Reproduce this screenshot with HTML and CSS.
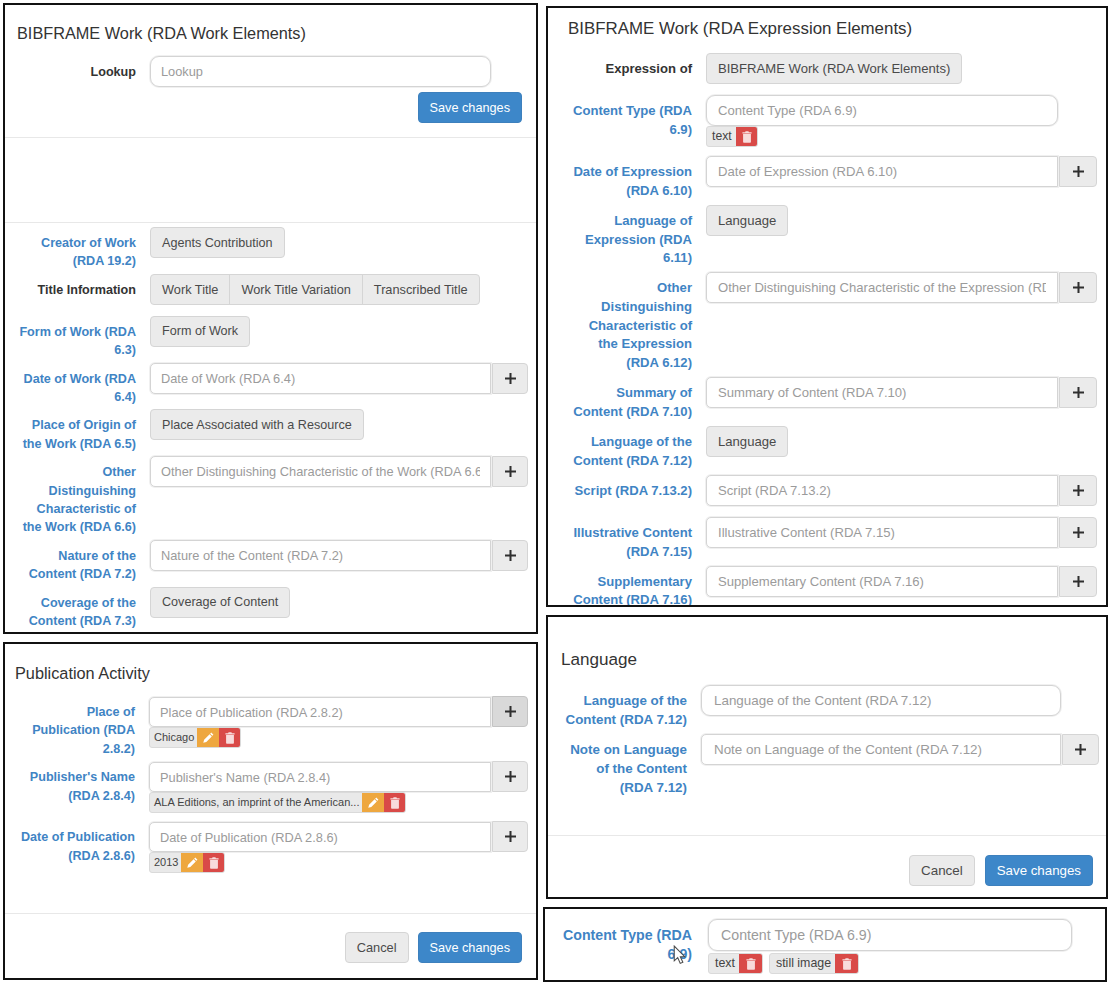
FILE: index.html
```html
<!DOCTYPE html>
<html lang="en">
<head>
<meta charset="utf-8">
<title>BIBFRAME RDA forms</title>
<link rel="stylesheet" href="styles.css">
</head>
<body>
<svg class="defs" width="0" height="0" aria-hidden="true">
  <symbol id="i-plus" viewBox="0 0 12 12"><path d="M4.9 0h2.2v4.9H12v2.2H7.100V12H4.900V7.100H0V4.900h4.900z"/></symbol>
  <symbol id="i-pencil" viewBox="0 0 12 12"><path d="M9 .6l2.400 2.400-1.200 1.200-2.400-2.400zM7.200 2.400l2.400 2.400-6 6-3.300.9.900-3.300z"/></symbol>
  <symbol id="i-trash" viewBox="0 0 12 14"><path d="M4.300 0h3.400l.6 1.200H11.500v1.500H.5V1.200h3.200zM1.300 3.500h9.400V13a1 1 0 0 1-1 1H2.300a1 1 0 0 1-1-1z"/><path class="slot" d="M3.400 5v7M6 5v7M8.600 5v7"/></symbol>
</svg>

<section class="panel pa">
  <h4 class="title">BIBFRAME Work (RDA Work Elements)</h4>
  <div class="row"><label class="lab dark">Lookup</label><div class="field"><div class="group"><input class="ctl solo" placeholder="Lookup"></div></div></div>
  <div class="actions inline"><button class="btn primary">Save changes</button></div>
  <hr class="rule">
  <div class="gap-empty"></div>
  <hr class="rule">
  <div class="rows">
    <div class="row"><label class="lab">Creator of Work (RDA 19.2)</label><div class="field"><button class="btn">Agents Contribution</button></div></div>
    <div class="row"><label class="lab dark">Title Information</label><div class="field"><div class="btn-group"><button class="btn">Work Title</button><button class="btn">Work Title Variation</button><button class="btn">Transcribed Title</button></div></div></div>
    <div class="row"><label class="lab">Form of Work (RDA 6.3)</label><div class="field"><button class="btn">Form of Work</button></div></div>
    <div class="row"><label class="lab">Date of Work (RDA 6.4)</label><div class="field"><div class="group"><input class="ctl" placeholder="Date of Work (RDA 6.4)"><button class="btn add"><svg class="ic-plus"><use href="#i-plus"/></svg></button></div></div></div>
    <div class="row"><label class="lab">Place of Origin of the Work (RDA 6.5)</label><div class="field"><button class="btn">Place Associated with a Resource</button></div></div>
    <div class="row"><label class="lab">Other Distinguishing Characteristic of the Work (RDA 6.6)</label><div class="field"><div class="group"><input class="ctl" placeholder="Other Distinguishing Characteristic of the Work (RDA 6.6)"><button class="btn add"><svg class="ic-plus"><use href="#i-plus"/></svg></button></div></div></div>
    <div class="row"><label class="lab">Nature of the Content (RDA 7.2)</label><div class="field"><div class="group"><input class="ctl" placeholder="Nature of the Content (RDA 7.2)"><button class="btn add"><svg class="ic-plus"><use href="#i-plus"/></svg></button></div></div></div>
    <div class="row"><label class="lab">Coverage of the Content (RDA 7.3)</label><div class="field"><button class="btn">Coverage of Content</button></div></div>
  </div>
</section>

<section class="panel pb">
  <h4 class="title">Publication Activity</h4>
  <div class="row"><label class="lab">Place of Publication (RDA 2.8.2)</label><div class="field"><div class="group"><input class="ctl" placeholder="Place of Publication (RDA 2.8.2)"><button class="btn add pressed"><svg class="ic-plus"><use href="#i-plus"/></svg></button></div>
    <div class="tags"><span class="tag"><span class="tag-text">Chicago</span><span class="tag-btn edit"><svg class="ic-pencil"><use href="#i-pencil"/></svg></span><span class="tag-btn del"><svg class="ic-trash"><use href="#i-trash"/></svg></span></span></div></div></div>
  <div class="row"><label class="lab">Publisher's Name (RDA 2.8.4)</label><div class="field"><div class="group"><input class="ctl" placeholder="Publisher's Name (RDA 2.8.4)"><button class="btn add"><svg class="ic-plus"><use href="#i-plus"/></svg></button></div>
    <div class="tags"><span class="tag"><span class="tag-text">ALA Editions, an imprint of the American...</span><span class="tag-btn edit"><svg class="ic-pencil"><use href="#i-pencil"/></svg></span><span class="tag-btn del"><svg class="ic-trash"><use href="#i-trash"/></svg></span></span></div></div></div>
  <div class="row"><label class="lab">Date of Publication (RDA 2.8.6)</label><div class="field"><div class="group"><input class="ctl" placeholder="Date of Publication (RDA 2.8.6)"><button class="btn add"><svg class="ic-plus"><use href="#i-plus"/></svg></button></div>
    <div class="tags"><span class="tag"><span class="tag-text">2013</span><span class="tag-btn edit"><svg class="ic-pencil"><use href="#i-pencil"/></svg></span><span class="tag-btn del"><svg class="ic-trash"><use href="#i-trash"/></svg></span></span></div></div></div>
  <hr class="rule foot-rule">
  <div class="actions"><button class="btn">Cancel</button><button class="btn primary">Save changes</button></div>
</section>

<section class="panel pc">
  <h4 class="title">BIBFRAME Work (RDA Expression Elements)</h4>
  <div class="row"><label class="lab dark">Expression of</label><div class="field"><button class="btn">BIBFRAME Work (RDA Work Elements)</button></div></div>
  <div class="row"><label class="lab">Content Type (RDA 6.9)</label><div class="field"><div class="group"><input class="ctl solo" placeholder="Content Type (RDA 6.9)"></div>
    <div class="tags"><span class="tag"><span class="tag-text">text</span><span class="tag-btn del"><svg class="ic-trash"><use href="#i-trash"/></svg></span></span></div></div></div>
  <div class="row"><label class="lab">Date of Expression (RDA 6.10)</label><div class="field"><div class="group"><input class="ctl" placeholder="Date of Expression (RDA 6.10)"><button class="btn add"><svg class="ic-plus"><use href="#i-plus"/></svg></button></div></div></div>
  <div class="row"><label class="lab">Language of Expression (RDA 6.11)</label><div class="field"><button class="btn">Language</button></div></div>
  <div class="row"><label class="lab">Other Distinguishing Characteristic of the Expression (RDA 6.12)</label><div class="field"><div class="group"><input class="ctl" placeholder="Other Distinguishing Characteristic of the Expression (RDA 6.12)"><button class="btn add"><svg class="ic-plus"><use href="#i-plus"/></svg></button></div></div></div>
  <div class="row"><label class="lab">Summary of Content (RDA 7.10)</label><div class="field"><div class="group"><input class="ctl" placeholder="Summary of Content (RDA 7.10)"><button class="btn add"><svg class="ic-plus"><use href="#i-plus"/></svg></button></div></div></div>
  <div class="row"><label class="lab">Language of the Content (RDA 7.12)</label><div class="field"><button class="btn">Language</button></div></div>
  <div class="row"><label class="lab">Script (RDA 7.13.2)</label><div class="field"><div class="group"><input class="ctl" placeholder="Script (RDA 7.13.2)"><button class="btn add"><svg class="ic-plus"><use href="#i-plus"/></svg></button></div></div></div>
  <div class="row"><label class="lab">Illustrative Content (RDA 7.15)</label><div class="field"><div class="group"><input class="ctl" placeholder="Illustrative Content (RDA 7.15)"><button class="btn add"><svg class="ic-plus"><use href="#i-plus"/></svg></button></div></div></div>
  <div class="row"><label class="lab">Supplementary Content (RDA 7.16)</label><div class="field"><div class="group"><input class="ctl" placeholder="Supplementary Content (RDA 7.16)"><button class="btn add"><svg class="ic-plus"><use href="#i-plus"/></svg></button></div></div></div>
</section>

<section class="panel pd">
  <h4 class="title">Language</h4>
  <div class="row"><label class="lab">Language of the Content (RDA 7.12)</label><div class="field"><div class="group"><input class="ctl solo" placeholder="Language of the Content (RDA 7.12)"></div></div></div>
  <div class="row"><label class="lab">Note on Language of the Content (RDA 7.12)</label><div class="field"><div class="group"><input class="ctl" placeholder="Note on Language of the Content (RDA 7.12)"><button class="btn add"><svg class="ic-plus"><use href="#i-plus"/></svg></button></div></div></div>
  <hr class="rule foot-rule">
  <div class="actions"><button class="btn">Cancel</button><button class="btn primary">Save changes</button></div>
</section>

<section class="panel pe">
  <div class="row"><label class="lab">Content Type (RDA 6.9)</label><div class="field"><div class="group"><input class="ctl solo" placeholder="Content Type (RDA 6.9)"></div>
    <div class="tags"><span class="tag"><span class="tag-text">text</span><span class="tag-btn del"><svg class="ic-trash"><use href="#i-trash"/></svg></span></span><span class="tag"><span class="tag-text">still image</span><span class="tag-btn del"><svg class="ic-trash"><use href="#i-trash"/></svg></span></span></div></div></div>
  <svg class="cursor" viewBox="0 0 12 19" width="13" height="20"><path d="M1 1v14l3.300-3 2.400 5.500 2.500-1.100-2.400-5.300H11z" fill="#fff" stroke="#4a4a4a" stroke-width="1"/></svg>
</section>
</body>
</html>
```
FILE: styles.css
```css
* { box-sizing: border-box; }
html, body { margin: 0; padding: 0; }
body {
  position: relative;
  width: 1111px;
  height: 984px;
  background: #fff;
  overflow: hidden;
  font-family: "Liberation Sans", Arial, sans-serif;
  color: #333;
}
.defs { position: absolute; }

/* Collage of separate dialogs placed on a free canvas */
.panel {
  --lab-w: 131px;
  --lab-pad: 13px;
  --lab-top: 7px;
  --lab-end: 3px;
  --lab-fs: 12.6px;
  --lab-gap: 14px;
  --ctl-w: 341px;
  --ctl-pad: 10px;
  --ctl-h: 31px;
  --add-w: 36px;
  --lh: 18.4px;
  --tag-fs: 11px;
  --tag-btn: 22px;
  --tag-pad-l: 4px;
  --tag-pad-r: 3px;
  position: absolute;
  border: 2px solid #111;
  background: #fff;
  overflow: hidden;
  font-size: 12.8px;
}
.pa { left: 3px; top: 3px; width: 535px; height: 631px; padding-top: 18px; }
.pb {
  left: 3px; top: 642px; width: 535px; height: 338px; padding-top: 19px;
  --ctl-w: 342px; --ctl-h: 30px; --lab-w: 130px; --lab-pad: 12px; --lab-top: 6px; --lab-end: 4px;
}
.pc {
  left: 546px; top: 6px; width: 562px; height: 601px; padding-top: 11px;
  --lab-w: 144px; --lab-pad: 22px; --lab-end: 4.4px; --lab-fs: 13.1px;
  --ctl-w: 352px; --ctl-pad: 11px; --add-w: 38px; --lh: 18.7px; --tag-fs: 12.2px;
  --tag-pad-l: 5px; --tag-pad-r: 4px;
  font-size: 13.1px;
}
.pd {
  left: 546px; top: 615px; width: 562px; height: 284px; padding-top: 33px;
  --lab-w: 139px; --lab-pad: 14px; --lab-top: 6px; --lab-end: 5px; --lab-fs: 13.4px;
  --ctl-w: 360px; --ctl-pad: 12px; --add-w: 37px; --lh: 19px;
  font-size: 13.4px;
}
.pe {
  left: 543px; top: 907px; width: 564px; height: 75px; padding-top: 10px;
  --lab-w: 147px; --lab-pad: 10px; --lab-gap: 16px; --lab-fs: 14.2px;
  --ctl-w: 364px; --ctl-pad: 12px; --ctl-h: 32px; --lh: 19px; --tag-fs: 12.4px; --tag-btn: 24px;
  --tag-pad-l: 6px; --tag-pad-r: 4px;
  font-size: 14.2px;
}

.title {
  margin: 0 0 13px;
  padding-left: 12px;
  font-size: 16.3px;
  line-height: 20px;
  font-weight: 400;
  color: #333;
}
.pb .title { padding-left: 10px; margin-bottom: 14px; }
.pc .title { padding-left: 20px; margin-bottom: 14px; font-size: 16.9px; }
.pd .title { padding-left: 13px; margin-bottom: 15px; font-size: 17.1px; }

.row { display: flex; gap: var(--lab-gap); }
.lab {
  flex: none;
  width: var(--lab-w);
  padding: var(--lab-top) 0 var(--lab-end) var(--lab-pad);
  text-align: right;
  font-size: var(--lab-fs);
  font-weight: 700;
  line-height: var(--lh);
  color: #3f84c4;
}
.lab.dark { color: #333; }
.field { flex: 1; min-width: 0; padding-bottom: 11px; }
.group { display: flex; align-items: flex-start; }

.ctl {
  width: var(--ctl-w);
  height: var(--ctl-h);
  padding: 0 var(--ctl-pad);
  border: 1px solid #d4d4d4;
  border-radius: 5px 0 0 5px;
  box-shadow: 0 0 0 1px #f0f0f0;
  background: #fff;
  font: inherit;
  color: #555;
  outline: none;
}
.ctl.solo { border-radius: 9px; }
.ctl::placeholder { color: #9b9b9b; opacity: 1; }

.btn {
  display: inline-block;
  height: 31px;
  padding: 0 11px;
  border: 1px solid #d5d5d5;
  border-radius: 4px;
  background: #ebebeb;
  font: inherit;
  color: #4a4a4a;
  white-space: nowrap;
}
.pa .btn { font-size: 12.6px; }
.pa .btn-group .btn { font-size: 12.75px; }
.btn.primary { background: #3d87c9; border-color: #3d80bd; color: #fff; font-size: 12.7px; }
.pd .btn.primary { font-size: 13.3px; }
.btn.add {
  width: var(--add-w);
  padding: 0;
  margin-left: 1px;
  border-radius: 0 4px 4px 0;
  display: flex;
  align-items: center;
  justify-content: center;
}
.pb .btn.add { margin-top: -1px; }
.btn.pressed { background: #d9d9d9; border-color: #c4c4c4; }
.btn-group { display: inline-flex; }
.btn-group .btn { border-radius: 0; }
.btn-group .btn + .btn { margin-left: -1px; }
.btn-group .btn:first-child { border-radius: 4px 0 0 4px; }
.btn-group .btn:last-child { border-radius: 0 4px 4px 0; }

.ic-plus { width: 11px; height: 11px; fill: #2f2f2f; }

.tags { display: flex; gap: 6px; height: 20px; margin-bottom: -1px; }
.pe .tags { margin-top: 2px; }
.tag {
  display: inline-flex;
  height: 21px;
  border-radius: 3px;
  overflow: hidden;
  background: #e9e9e9;
  border: 1px solid #dadada;
  font-size: var(--tag-fs);
  line-height: 19px;
  color: #444;
}
.tag-text { padding: 0 var(--tag-pad-r) 0 var(--tag-pad-l); white-space: nowrap; }
.tag-btn {
  width: var(--tag-btn);
  display: flex;
  align-items: center;
  justify-content: center;
  margin: -1px 0;
}
.tag-btn:last-child { margin-right: -1px; }
.edit { background: #eea73f; }
.del { background: #d94a48; }
.ic-pencil { width: 11px; height: 11px; fill: #fff; }
.ic-trash { width: 10px; height: 12px; fill: #f8dcdc; }
.ic-trash .slot { fill: none; stroke: #e79090; stroke-width: .8; }

.rule { margin: 0; border: 0; border-top: 1px solid #e8e8e8; }
.actions { display: flex; justify-content: flex-end; gap: 9px; padding-right: 14px; }
.actions.inline { margin-top: -6px; margin-bottom: 14px; }
.gap-empty { height: 84px; }
.rows { padding-top: 4px; }

.pb .foot-rule { margin-top: 31px; margin-bottom: 18px; }
.pd .foot-rule { margin-top: 33px; margin-bottom: 19px; }
.pd .actions { padding-right: 13px; gap: 10px; }

.cursor { position: absolute; left: 128px; top: 36px; }
```
